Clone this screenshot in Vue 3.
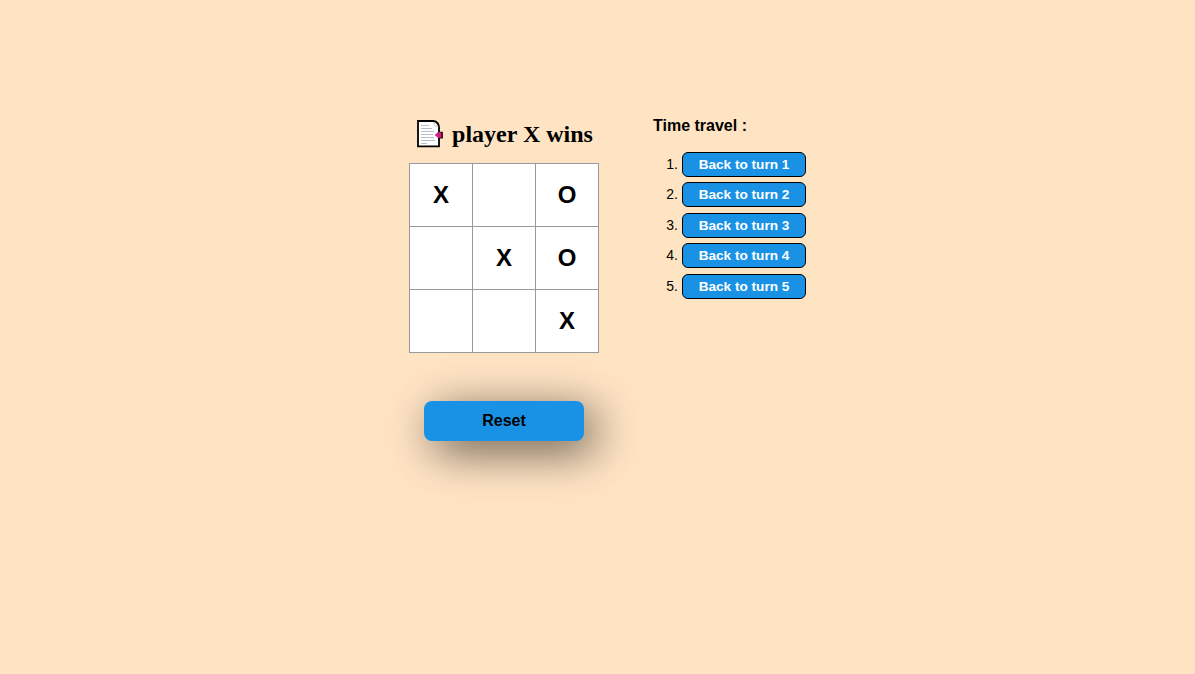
<script setup>
const squares = ['X', '', 'O', '', 'X', 'O', '', '', 'X']
const turns = [1, 2, 3, 4, 5]
</script>

<template>
  <main class="game">
    <section class="play">
      <h2 class="status">
        <svg class="doc" width="26" height="28" viewBox="0 0 26 28">
          <path d="M1 1h15.5q5 .8 5.5 6V26.3H1z" fill="#fff" stroke="#000" stroke-width="1.8" />
          <path d="M16.5 2q.2 4.2 4.8 5" fill="#e9e3e9" stroke="#c9c3cc" stroke-width=".8" />
          <path d="M4 5.5h8M4 8.5h11M4 11.5h13M4 14.5h12M4 17.5h13M4 20.5h14M4 23.5h6" stroke="#b9bfca" stroke-width="1" />
          <path d="M21 12.4h4.2v5.4H21" fill="#bd1874" stroke="#250b1b" stroke-width="1.4" />
          <path d="M17.8 15l3-2.8h3v5.6h-3z" fill="#d51b85" />
        </svg>
        <span>player X wins</span>
      </h2>
      <div class="board">
        <button v-for="(mark, i) in squares" :key="i" class="square">{{ mark }}</button>
      </div>
      <button class="reset">Reset</button>
    </section>
    <aside class="history">
      <h3 class="title">Time travel :</h3>
      <ol class="turns">
        <li v-for="turn in turns" :key="turn" class="turn">
          <span class="number">{{ turn }}.</span>
          <button class="back">Back to turn {{ turn }}</button>
        </li>
      </ol>
    </aside>
  </main>
</template>

<style>
body {
  background: #ffe4c4;
}
</style>

<style scoped>
.game {
  box-sizing: border-box;
  min-height: 674px;
  padding: 116px 0 0 409px;
  display: flex;
  align-items: flex-start;
  gap: 54px;
  font-family: "Liberation Sans", Arial, sans-serif;
  color: #000;
}
.play {
  width: 190px;
  display: flex;
  flex-direction: column;
  align-items: center;
}
.status {
  margin: 0;
  height: 47px;
  padding-left: 2px;
  display: flex;
  gap: 9px;
  font: bold 24px/36px "Liberation Serif", "Times New Roman", serif;
  white-space: nowrap;
}
.doc {
  margin-top: 4px;
}
.board {
  display: grid;
  grid-template-columns: repeat(3, 63px);
  grid-auto-rows: 63px;
  width: 189px;
  border-top: 1px solid #999;
  border-left: 1px solid #999;
}
.square {
  box-sizing: border-box;
  padding: 0;
  border: 0 solid #999;
  border-width: 0 1px 1px 0;
  background: #fff;
  color: #000;
  font: bold 24px/34px "Liberation Sans", Arial, sans-serif;
}
.reset {
  width: 160px;
  height: 40px;
  margin-top: 48px;
  padding: 0 0 1px;
  border: 0;
  border-radius: 8px;
  background: #1992e6;
  color: #000;
  font: bold 16px "Liberation Sans", Arial, sans-serif;
  box-shadow: 10px 10px 46px rgba(0, 0, 0, 0.64);
}
.title {
  margin: 0;
  font-size: 16px;
  line-height: 20px;
}
.turns {
  margin: 16px 0 0;
  padding: 0;
  list-style: none;
}
.turn {
  display: flex;
  height: 30.4px;
  font-size: 14px;
}
.number {
  width: 29px;
  box-sizing: border-box;
  padding-right: 4px;
  text-align: right;
  line-height: 25px;
}
.back {
  box-sizing: border-box;
  width: 124px;
  height: 25px;
  padding: 0;
  border: 1px solid #000;
  border-radius: 6px;
  background: #1992e6;
  color: #fff;
  font: bold 13.6px "Liberation Sans", Arial, sans-serif;
}
</style>
